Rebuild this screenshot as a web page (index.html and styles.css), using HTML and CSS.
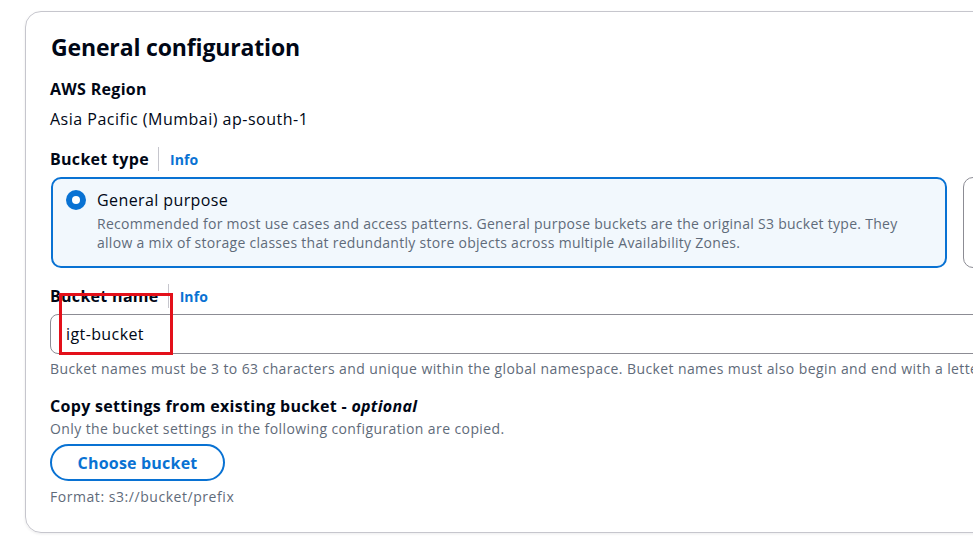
FILE: index.html
```html
<!DOCTYPE html>
<html lang="en">
<head>
<meta charset="utf-8">
<title>General configuration</title>
<link rel="stylesheet" href="styles.css">
</head>
<body>
<div class="page">
  <section class="card">
    <h2 class="title">General configuration</h2>

    <div class="field region-field">
      <div class="label">AWS Region</div>
      <div class="value">Asia Pacific (Mumbai) ap-south-1</div>
    </div>

    <div class="field">
      <div class="label-row"><span class="label">Bucket type</span><span class="sep"></span><a class="info">Info</a></div>
      <div class="tiles">
        <div class="tile selected">
          <span class="radio"><span class="dot"></span></span>
          <div class="tile-text">
            <div class="tile-title">General purpose</div>
            <div class="tile-desc">Recommended for most use cases and access patterns. General purpose buckets are the original S3 bucket type. They allow a mix of storage classes that redundantly store objects across multiple Availability Zones.</div>
          </div>
        </div>
        <div class="tile"></div>
      </div>
    </div>

    <div class="field name-field">
      <div class="label-row"><span class="label">Bucket name</span><span class="sep"></span><a class="info">Info</a></div>
      <div class="input">igt-bucket</div>
      <div class="help">Bucket names must be 3 to 63 characters and unique within the global namespace. Bucket names must also begin and end with a letter or number.</div>
      <div class="highlight"></div>
    </div>

    <div class="field copy-field">
      <div class="label">Copy settings from existing bucket - <em>optional</em></div>
      <div class="desc">Only the bucket settings in the following configuration are copied.</div>
      <button class="btn">Choose bucket</button>
      <div class="help">Format: s3://bucket/prefix</div>
    </div>
  </section>
</div>
</body>
</html>
```

FILE: styles.css
```css
* { box-sizing: border-box; }
html, body { margin: 0; padding: 0; background: #ffffff; overflow: hidden; }
body {
  font-family: "Open Sans", "Noto Sans", sans-serif;
  color: #000716;
  width: 973px;
  height: 546px;
}
.page {
  padding: 11px 0 0 25px;
}
.card {
  width: 1000px;
  height: 522px;
  border: 1px solid #c6c6cd;
  border-radius: 16px;
  padding: 20px 0 0 24px;
  box-shadow: 0 1px 3px rgba(0, 7, 22, 0.08);
  overflow: hidden;
}
.title {
  margin: 0 0 16px 1px;
  font-size: 23px;
  font-weight: 700;
  line-height: 30px;
  letter-spacing: -0.15px;
}
.field { position: relative; }
.region-field { margin-bottom: 16px; }
.label {
  font-size: 16px;
  font-weight: 700;
  line-height: 22px;
  letter-spacing: 0.3px;
}
.label em { font-weight: 700; font-style: italic; }
.value {
  font-size: 16px;
  line-height: 22px;
  margin-top: 8px;
  letter-spacing: 0.5px;
}
.label-row {
  display: flex;
  align-items: center;
  height: 26px;
}
.sep {
  width: 1px;
  height: 24px;
  background: #c6c6cd;
  margin: 0 11px 0 9px;
}
.info {
  color: #0972d3;
  font-size: 14px;
  font-weight: 700;
  letter-spacing: 0.1px;
}
.tiles {
  display: flex;
  gap: 16px;
  margin-top: 5px;
  padding-left: 1px;
}
.tile {
  flex: 0 0 auto;
  width: 120px;
  height: 91px;
  border: 1px solid #8c8c94;
  border-radius: 10px;
}
.tile.selected {
  width: 896px;
  border: 2px solid #0972d3;
  background: #f2f8fd;
  display: flex;
  gap: 11px;
  padding: 10px 40px 0 13px;
}
.radio {
  flex: 0 0 auto;
  width: 20px;
  height: 20px;
  margin-top: 1px;
  border-radius: 50%;
  background: #0972d3;
  display: flex;
  align-items: center;
  justify-content: center;
}
.dot {
  width: 8px;
  height: 8px;
  border-radius: 50%;
  background: #ffffff;
}
.tile-title {
  font-size: 16px;
  line-height: 22px;
  letter-spacing: 0.4px;
}
.tile-desc {
  color: #5f6b7a;
  font-size: 14px;
  line-height: 19px;
  margin-top: 3px;
  letter-spacing: 0.28px;
}
.name-field { margin-top: 15px; }
.input {
  width: 1000px;
  height: 40px;
  margin-top: 5px;
  border: 1px solid #8c8c94;
  border-radius: 8px;
  padding: 0 15px;
  display: flex;
  align-items: center;
  font-size: 16px;
  letter-spacing: 0.4px;
}
.help {
  color: #5f6b7a;
  font-size: 14px;
  line-height: 20px;
  margin-top: 5px;
  white-space: nowrap;
  letter-spacing: 0.4px;
}
.highlight {
  position: absolute;
  left: 9px;
  top: 10px;
  width: 114px;
  height: 62px;
  border: 3px solid #e3101a;
}
.copy-field { margin-top: 16px; }
.desc {
  color: #5f6b7a;
  font-size: 14px;
  line-height: 20px;
  margin-top: 2px;
  letter-spacing: 0.4px;
}
.btn {
  display: block;
  margin-top: 5px;
  width: 175px;
  height: 37px;
  border: 2px solid #0972d3;
  border-radius: 20px;
  background: #ffffff;
  color: #0972d3;
  font-family: inherit;
  font-size: 16px;
  font-weight: 700;
  letter-spacing: 0.2px;
  padding: 0;
}
.copy-field .help { margin-top: 6px; letter-spacing: 0.55px; }
```
